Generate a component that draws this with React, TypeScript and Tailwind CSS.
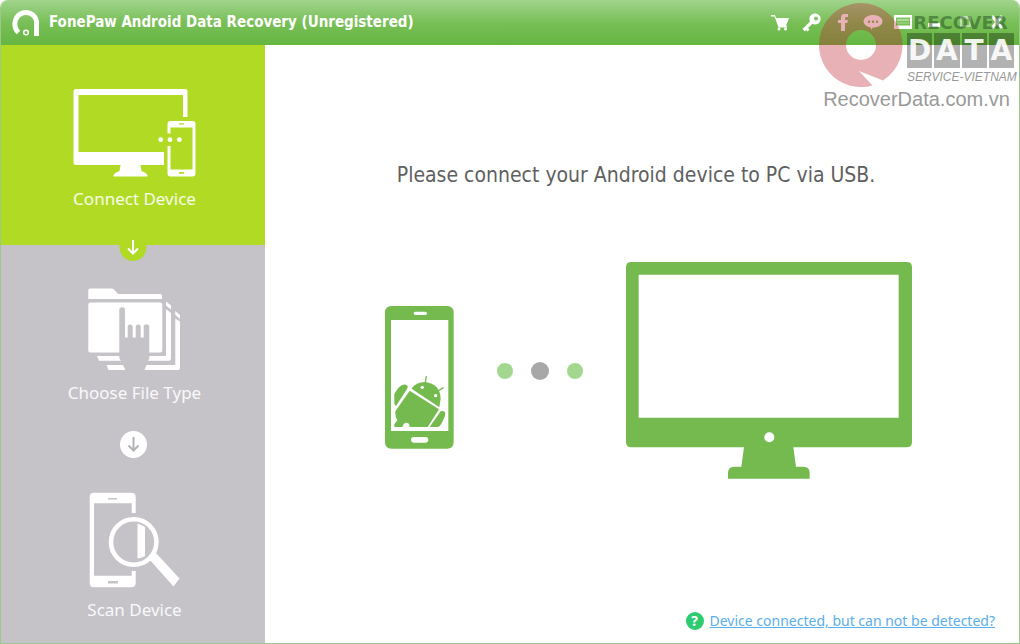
import type { ReactNode } from 'react';

const condensed = "font-['DejaVu_Sans_Condensed','DejaVu_Sans',sans-serif]";

export default function App() {
  return (
    <div className="relative flex min-h-screen flex-col overflow-hidden rounded-t-lg border-x border-b border-[#9cc98a] bg-white font-['Noto_Sans',sans-serif]">
      <TitleBar />
      <div className="flex flex-1">
        <Sidebar />
        <Main />
      </div>
      <Watermark />
    </div>
  );
}

function TitleBar() {
  return (
    <header className="flex h-[45px] items-center justify-between bg-linear-to-b from-[#a0d48c] via-[#79bf57] to-[#65b540] pr-[7px] pb-0.5 pl-2.5 text-white">
      <div className="flex items-center gap-2.5">
        <svg width="28" height="30" viewBox="12 8 28 30" fill="none" aria-hidden="true">
          <path d="M19.5 33.5A11 11.500 0 1 1 37.500 22V37" stroke="currentColor" strokeWidth="5" />
          <circle cx="27" cy="33.500" r="2.300" stroke="currentColor" strokeWidth="1.500" />
        </svg>
        <h1 className={`text-[15px] leading-5 font-bold ${condensed}`}>
          FonePaw Android Data Recovery (Unregistered)
        </h1>
      </div>
      <div className="flex">
        <BarButton label="Buy">
          <path d="M1 4h4l1 3h13l-3 8H8L4.500 5.500H1zM8 15h9v1.500H8z" />
          <circle cx="9" cy="18" r="1.500" />
          <circle cx="15.500" cy="18" r="1.500" />
        </BarButton>
        <BarButton label="Register">
          <path
            fillRule="evenodd"
            d="M14 2.500a5.500 5.500 0 1 1-2.500 10.300L7 17l1.500 1.500L6.500 20.500 5 19l-1 1.500-2.500-2.500L9 10.500A5.500 5.500 0 0 1 14 2.500zm1 3a2 2 0 1 0 0 4 2 2 0 0 0 0-4z"
          />
        </BarButton>
        <BarButton label="Facebook">
          <path d="M9 20v-8H6V9h3V6.500C9 4 10.500 3 12.500 3H16v3h-1.500c-1 0-1.500.4-1.500 1.200V9h2.800l-.4 3H13v8z" />
        </BarButton>
        <BarButton label="Feedback">
          <path
            fillRule="evenodd"
            d="M10 4c5 0 9.500 2.700 9.500 6.200s-4 6.300-9.500 6.300L8 19v-2.500c-4-.7-7.500-3-7.500-6C.500 6.700 5 4 10 4zM6 9.500a1.200 1.200 0 1 0 0 2.400 1.200 1.200 0 0 0 0-2.400zm4 0a1.200 1.200 0 1 0 0 2.400 1.200 1.200 0 0 0 0-2.400zm4 0a1.200 1.200 0 1 0 0 2.400 1.200 1.200 0 0 0 0-2.400z"
          />
        </BarButton>
        <BarButton label="Menu">
          <path fillRule="evenodd" d="M0 4h18v14H0zM2 6.500v8h14v-8z" />
          <path d="M3 8h12v2H3zM3 11.500h12v1H3z" opacity=".4" />
        </BarButton>
        <BarButton label="Minimize">
          <path d="M3 12h12v4H3z" />
        </BarButton>
        <BarButton label="Maximize">
          <path fillRule="evenodd" opacity=".5" d="M4 5h11v11H4zM6 8v6h7V8z" />
        </BarButton>
        <BarButton label="Close">
          <path d="M4 6l2-2 4 4.500 4-4.500 2 2-4 5 4 5-2 2-4-4.500-4 4.500-2-2 4-5z" />
        </BarButton>
      </div>
    </header>
  );
}

function BarButton({ label, children }: { label: string; children: ReactNode }) {
  return (
    <button type="button" aria-label={label} className="flex w-[31px] justify-center py-2">
      <svg width="20" height="22" viewBox="0 0 20 22" fill="currentColor" aria-hidden="true">
        {children}
      </svg>
    </button>
  );
}

function Sidebar() {
  return (
    <nav className="flex w-[264px] shrink-0 flex-col bg-[#c5c2c8] text-white">
      <button
        type="button"
        className="relative flex flex-col items-center bg-[#b0da23] pt-11 pb-8 pl-[3px]"
      >
        <ConnectIcon />
        <StepLabel>Connect Device</StepLabel>
        <span className="absolute -bottom-4 left-1/2 -translate-x-1/2 rounded-full bg-[#b0da23]">
          <ArrowDown />
        </span>
      </button>
      <button type="button" className="flex flex-col items-center pt-[42px] pl-[3px]">
        <FolderIcon />
        <StepLabel>Choose File Type</StepLabel>
      </button>
      <span className="mx-auto my-6 rounded-full bg-white text-[#b5b2b8]">
        <ArrowDown />
      </span>
      <button type="button" className="flex flex-col items-center pt-2.5 pb-[18px] pl-[3px]">
        <ScanIcon />
        <StepLabel>Scan Device</StepLabel>
      </button>
    </nav>
  );
}

function StepLabel({ children }: { children: ReactNode }) {
  return <span className="mt-2 text-[17px] leading-7 text-white/90">{children}</span>;
}

function ArrowDown() {
  return (
    <svg
      width="27"
      height="27"
      viewBox="0 0 27 27"
      fill="none"
      stroke="currentColor"
      strokeWidth="2"
      aria-hidden="true"
    >
      <path d="M13.500 6v13M8.500 14.500l5 5 5-5" />
    </svg>
  );
}

function ConnectIcon() {
  return (
    <svg width="124" height="88" viewBox="73 89 124 88" fill="currentColor" aria-hidden="true">
      <path d="M76 89h109q2.500 0 2.500 2.500V117h-4.500V95H78.500v57H164v13h-23.500l1 6q4 1 6 4v1.500h-34V175q2-3 6-4l1-6H76q-2.500 0-2.500-2.500v-71Q73.500 89 76 89z" />
      <path
        fillRule="evenodd"
        d="M170.500 121h22q3 0 3 3v49.500q0 3-3 3h-22q-3 0-3-3V146h3v23.500h22V127.500h-22v6h-3V124q0-3 3-3zM179 123.300v1.200h5v-1.200zM179 172v1.800h5V172z"
      />
      <circle cx="160.700" cy="139.700" r="2.400" />
      <circle cx="170" cy="139.700" r="2.400" />
      <circle cx="179.300" cy="139.700" r="2.400" />
    </svg>
  );
}

function FolderIcon() {
  return (
    <svg width="93" height="84" viewBox="88 287 93 84" fill="currentColor" aria-hidden="true">
      <path d="M90 288.500h22q1.500 0 2.500 1.500l3.500 4h42.500q1.500 0 1.500 2v3H88.300v-9q0-1.500 1.700-1.500z" />
      <rect x="88.300" y="302.500" width="74" height="50" rx="2" />
      <path d="M166 301.500l5 4v4l-5-4zM166 309l5 4v45.500q0 2.200-2.200 2.200H99l-2-4.700h69z" />
      <path d="M175.300 311l4.700 4v4l-4.700-4zM175.300 318.500l4.700 3v46q0 2.500-2.500 2.500H108.500l-2-5h68.800z" />
      <path
        fill="#c5c2c8"
        d="M119.300 358V310a2.800 2.800 0 0 1 5.700 0v27.500h2.700V327a2.500 2.500 0 0 1 5 0v10.500h3V327a2.500 2.500 0 0 1 5 0v10.500h3V327a2.700 2.700 0 0 1 5.600 0v31l-5.300 13h-18z"
      />
    </svg>
  );
}

function ScanIcon() {
  return (
    <svg width="92" height="96" viewBox="89 492 92 96" fill="currentColor" aria-hidden="true">
      <path
        fillRule="evenodd"
        d="M94 492.700h37.500q4.200 0 4.200 4.200v86.200q0 4.200-4.200 4.200H94q-4.300 0-4.300-4.200v-86.200q0-4.200 4.300-4.200zm0 10.600v72.400h37.700v-72.400zM108 498v1.500h9V498zM108 581v2.500h10V581z"
      />
      <circle cx="133.700" cy="542" r="29" fill="#c5c2c8" />
      <path d="M137.500 523.500q4 1 7.500 3.500v29q-3.500 2-7.500 2.500z" />
      <circle cx="133.700" cy="542" r="22.700" fill="none" stroke="currentColor" strokeWidth="4.600" />
      <path d="M149 559l6-7 24.500 26.500-6 8z" />
    </svg>
  );
}

function Main() {
  return (
    <main className="flex flex-1 flex-col items-center">
      <p className={`mt-28 pr-3 text-[21px] leading-9 text-[#606060] ${condensed}`}>
        Please connect your Android device to PC via USB.
      </p>
      <div className="mt-[69px] flex items-center pl-3">
        <div className="pt-3.5">
          <PhoneDrawing />
        </div>
        <div className="flex items-center gap-[18px] px-[43px]">
          <span className="size-4 rounded-full bg-[#a3d78f]" />
          <span className="size-[18px] rounded-full bg-[#a8a8a8]" />
          <span className="size-4 rounded-full bg-[#a3d78f]" />
        </div>
        <MonitorDrawing />
      </div>
      <div className="mt-auto mr-6 mb-2 flex items-center gap-1.5 self-end">
        <span className="flex size-[18px] items-center justify-center rounded-full bg-[#2ecc71] text-sm font-bold text-white">
          ?
        </span>
        <a href="#help" className="text-sm leading-7 text-[#5aaeea] underline">
          Device connected, but can not be detected?
        </a>
      </div>
    </main>
  );
}

function PhoneDrawing() {
  return (
    <svg width="69" height="143" viewBox="42 30 207 429" fill="#74ba4e" aria-hidden="true">
      <path
        fillRule="evenodd"
        d="M62 30h166q20 0 20 20v388q0 20-20 20H62q-20 0-20-20V50q0-20 20-20zm-2 42v333h172V72zM133 47q-5 0-5 5t5 5h30q5 0 5-5t-5-5zM129 423q-9 0-9 8.500t9 8.500h34q9 0 9-8.500t-9-8.500z"
      />
      <path d="M70 324v-28q1-6 6-12l8-10q14-14 26-4 1 3-2 9L75 330zM116 284l88 56-34 53h-54q0-13-10-13-8 0-12 13H70v-8l9-12q-6-8-6-22v-5z" />
      <path d="M122 278q12-20 40-20 46 6 47 50l-4 26z" />
      <path d="M209 346q17-4 13 14l-10 22q-4 9-12 11h-24z" />
      <path d="M163 260l3-20M196 288l22-13" stroke="#74ba4e" strokeWidth="4" />
      <circle cx="154" cy="274" r="5" fill="#fff" />
      <circle cx="194" cy="299" r="5" fill="#fff" />
    </svg>
  );
}

function MonitorDrawing() {
  return (
    <svg width="286" height="217" viewBox="48 36 858 651" fill="#74ba4e" aria-hidden="true">
      <path
        fillRule="evenodd"
        d="M64 36h826q16 0 16 16v524q0 16-16 16H550l8 58h22q19 0 19 19v17H354v-17q0-19 19-19h21l8-58H64q-16 0-16-16V52q0-16 16-16zm22 38v429h780V74z"
      />
      <circle cx="478" cy="562" r="15" fill="#fff" />
    </svg>
  );
}

function Watermark() {
  return (
    <div className="pointer-events-none absolute top-[3px] right-[5px] w-[195px] font-['Liberation_Sans',sans-serif]">
      <div className="flex justify-between">
        <svg width="84" height="84" viewBox="0 0 84 84" aria-hidden="true">
          <path
            fill="#bd2635"
            fillOpacity=".36"
            fillRule="evenodd"
            d="M42 0a42 42 0 0 1 22 77.500L40 68 53.500 82.400A42 42 0 1 1 42 0zm0 27a15 15 0 1 0 0 30 15 15 0 0 0 0-30z"
          />
        </svg>
        <div className="flex w-[107px] flex-col pt-2.5">
          <span className="text-center font-['DejaVu_Sans',sans-serif] text-lg leading-5 font-bold text-[#205020]/50">
            RECOVER
          </span>
          <div className="flex gap-0.5 font-['DejaVu_Sans',sans-serif] text-[28px] leading-[35px] font-bold text-white/90">
            <span className="flex-1 bg-black/30 text-center">D</span>
            <span className="flex-1 bg-black/30 text-center">A</span>
            <span className="flex-1 bg-black/30 text-center">T</span>
            <span className="flex-1 bg-black/30 text-center">A</span>
          </div>
          <span className="text-xs leading-[18px] whitespace-nowrap text-[#999] italic">
            SERVICE-VIETNAM
          </span>
        </div>
      </div>
      <div className="text-center text-xl leading-6 text-[#999]">RecoverData.com.vn</div>
    </div>
  );
}
